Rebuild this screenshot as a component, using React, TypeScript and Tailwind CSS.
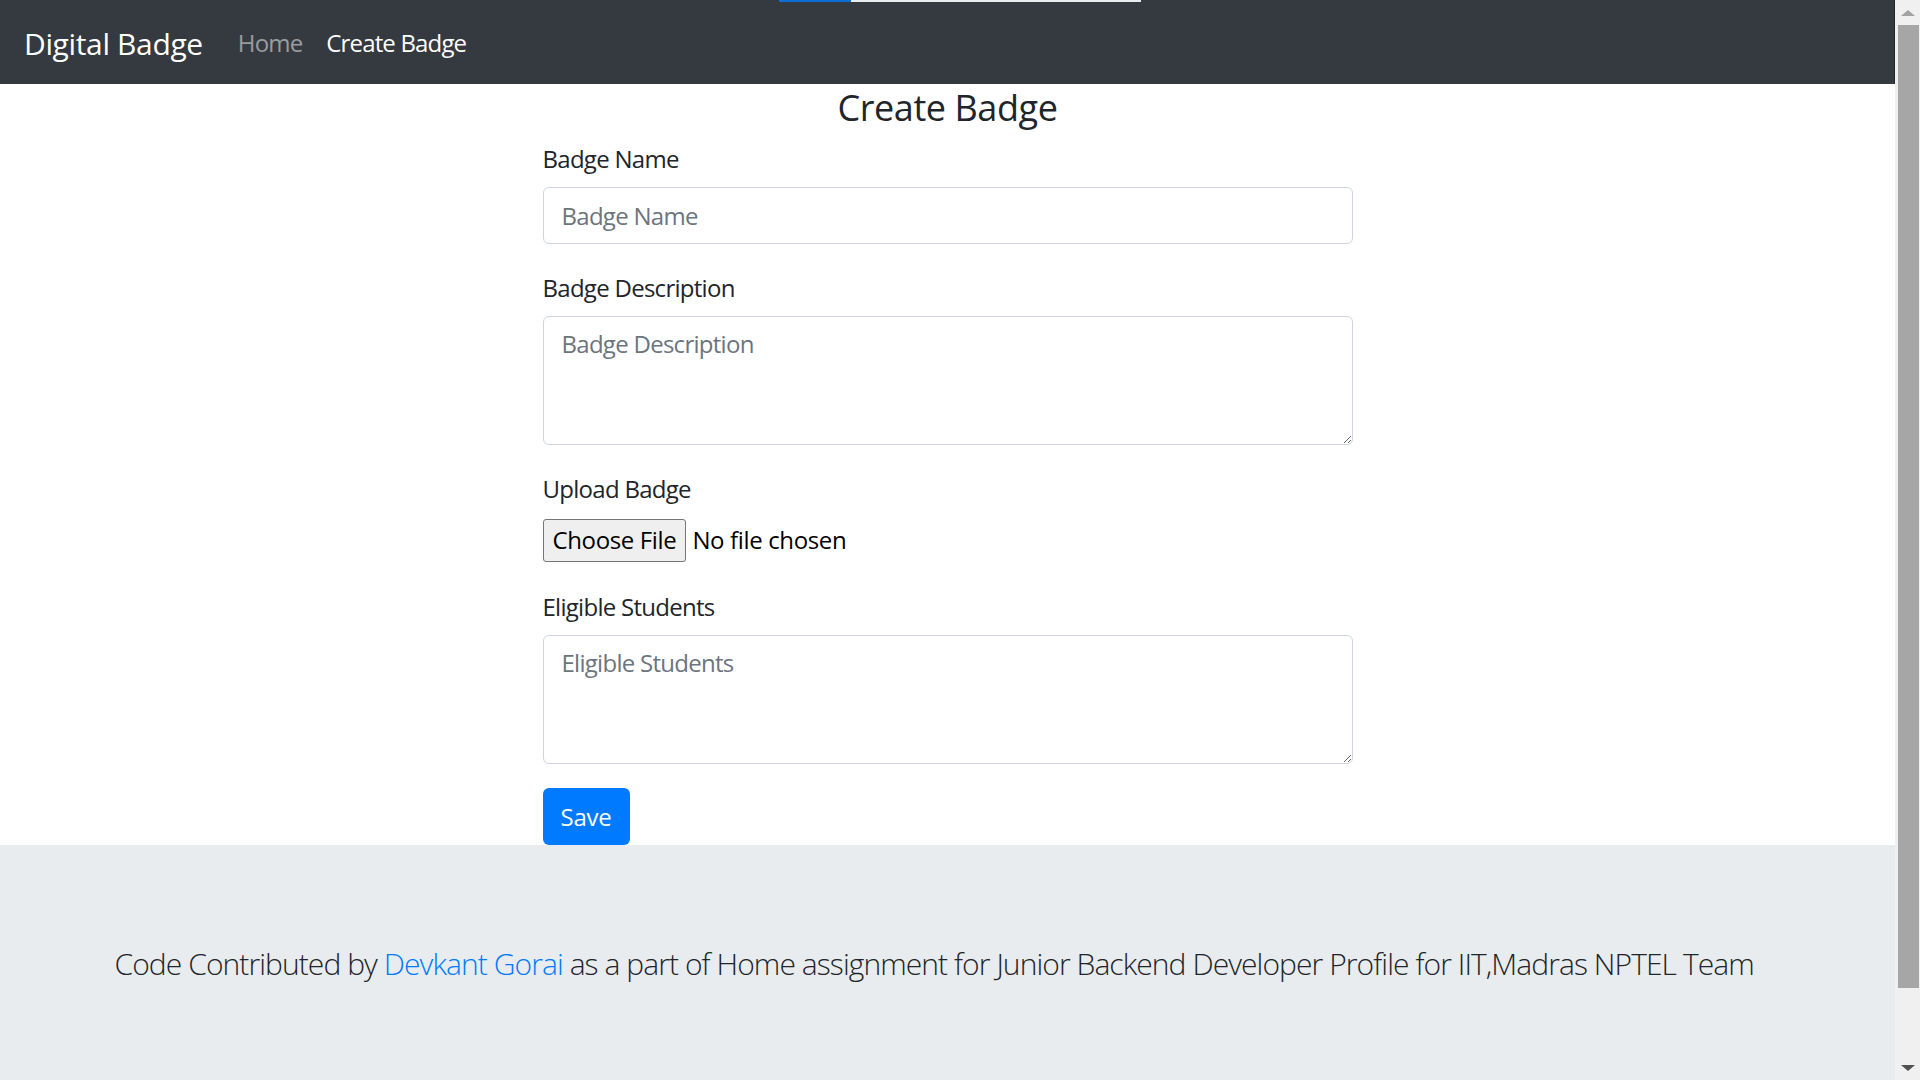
import React from 'react';

const font = "font-['Open_Sans','Noto_Sans',sans-serif]";

const Field: React.FC<{ label: string; children: React.ReactNode }> = ({ label, children }) => (
  <div className="mb-[24px]">
    <label className="block pt-[2px] mb-[10px] text-[24px] leading-[36px] text-[#212529] tracking-[-0.03em]">{label}</label>
    {children}
  </div>
);

const Scrollbar: React.FC = () => (
  <div className="w-[25px] h-[1080px] bg-[#f0f0f0] flex flex-col items-center shrink-0">
    <div className="h-[25px] flex items-center justify-center">
      <div className="w-0 h-0 border-l-[7px] border-r-[7px] border-b-[6px] border-l-transparent border-r-transparent border-b-[#a3a3a3]" />
    </div>
    <div className="w-[21px] h-[963px] bg-[#a6a6a6] ml-[2px]" />
    <div className="flex-1 flex items-end justify-center pb-[9px]">
      <div className="w-0 h-0 border-l-[7px] border-r-[7px] border-t-[6px] border-l-transparent border-r-transparent border-t-[#505050]" />
    </div>
  </div>
);

export default function App() {
  return (
    <div className={`flex w-[1920px] h-[1080px] overflow-hidden bg-white ${font}`}>
      <div className="flex-1 flex flex-col h-[1080px] overflow-hidden">
        {/* navbar */}
        <nav className="relative h-[84px] bg-[#343a40] flex items-center px-[24px] shrink-0 border-r border-[#1c2a38]">
          <div className="absolute top-0 left-[779px] w-[362px] h-[2px] bg-[#e9ecef]">
            <div className="w-[72px] h-[2px] bg-[#0b6fd7]" />
          </div>
          <a className="text-white text-[30px] leading-[45px] mr-[23px] mt-[2px] tracking-[-0.012em]">Digital Badge</a>
          <a className="px-[12px] text-[24px] leading-[36px] mt-[2px] text-white/50 tracking-[-0.035em]">Home</a>
          <a className="px-[12px] text-[24px] leading-[36px] mt-[2px] text-white tracking-[-0.035em]">Create Badge</a>
        </nav>

        {/* form */}
        <div className="w-[810px] mx-auto shrink-0">
          <h4 className="text-center pt-[2px] text-[36px] leading-[43px] font-medium text-[#212529] mb-[10px] tracking-[-0.012em]">Create Badge</h4>
          <Field label="Badge Name">
            <input
              placeholder="Badge Name"
              className="block w-full h-[57px] px-[18px] border-[1.5px] border-[#ced4da] rounded-[6px] text-[24px] text-[#495057] placeholder:text-[#6c757d] tracking-[-0.03em] outline-none"
            />
          </Field>
          <Field label="Badge Description">
            <textarea
              rows={3}
              placeholder="Badge Description"
              className="block w-full h-[129px] px-[18px] py-[9px] border-[1.5px] border-[#ced4da] rounded-[6px] text-[24px] leading-[36px] placeholder:text-[#6c757d] tracking-[-0.03em] outline-none"
            />
          </Field>
          <Field label="Upload Badge">
            <div className="flex items-center h-[46px] text-[24px] text-black tracking-[-0.015em]">
              <button className="h-[43px] px-[9px] bg-[#efefef] border border-[#767676] rounded-[3px] leading-[36px]">Choose File</button>
              <span className="ml-[6px]">No file chosen</span>
            </div>
          </Field>
          <Field label="Eligible Students">
            <textarea
              rows={3}
              placeholder="Eligible Students"
              className="block w-full h-[129px] px-[18px] py-[9px] border-[1.5px] border-[#ced4da] rounded-[6px] text-[24px] leading-[36px] placeholder:text-[#6c757d] tracking-[-0.03em] outline-none"
            />
          </Field>
          <button className="h-[57px] px-[18px] bg-[#007bff] text-white text-[24px] leading-[36px] rounded-[6px] tracking-[-0.01em]">Save</button>
        </div>

        {/* footer */}
        <div className="flex-1 bg-[#e9ecef] pt-[96px]">
          <div className="w-[1710px] mx-auto px-[22px]">
            <p className="text-[30px] leading-[45px] font-light text-[#212529] tracking-[-0.031em]">
              Code Contributed by <a className="text-[#007bff]">Devkant Gorai</a> as a part of Home assignment for Junior Backend Developer Profile for IIT,Madras NPTEL Team
            </p>
          </div>
        </div>
      </div>
      <Scrollbar />
    </div>
  );
}
